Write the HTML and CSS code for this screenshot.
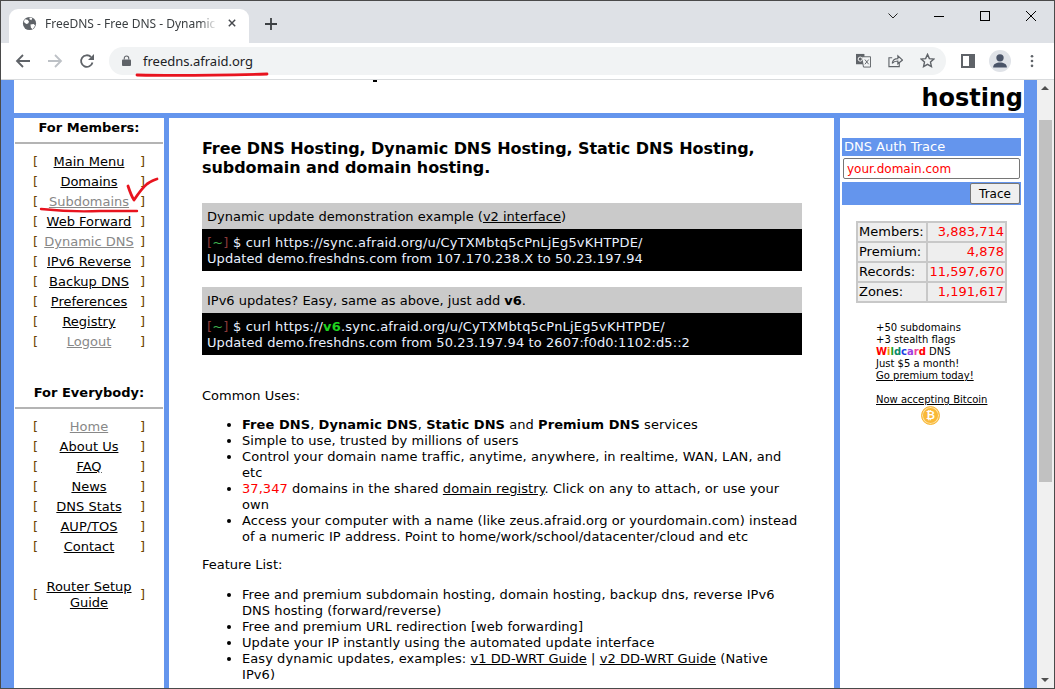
FILE: index.html
```html
<!DOCTYPE html>
<html lang="en">
<head>
<meta charset="utf-8">
<title>FreeDNS - Free DNS - Dynamic DNS</title>
<link rel="stylesheet" href="styles.css">
</head>
<body>
<div class="window">
  <div class="tabstrip">
    <div class="tab">
      <svg class="favicon" viewBox="0 0 16 16"><circle cx="8" cy="8" r="7" fill="#5f6368"/><path d="M3 3.500l3 .5 1.500 2-1 2-2 .5-2.500-2zM9 9l3.500-.5 1.500 1.500-2.500 4-2-1.500zM8 1.500l3 .5-1 2.500-2-1z" fill="#fff"/></svg>
      <span class="tab-title">FreeDNS - Free DNS - Dynamic</span>
      <svg class="tab-close" viewBox="0 0 10 10"><path d="M1 1l8 8M9 1L1 9" stroke="#45484d" stroke-width="1.800"/></svg>
    </div>
    <svg class="newtab" viewBox="0 0 12 12"><path d="M6 0v12M0 6h12" stroke="#3c4043" stroke-width="1.800"/></svg>
    <div class="winctl">
      <svg class="wc wc-down" viewBox="0 0 10 6"><path d="M.5.5L5 5 9.500.5" fill="none" stroke="#222"/></svg>
      <svg class="wc wc-min" viewBox="0 0 10 10"><path d="M0 5.500h10" stroke="#000"/></svg>
      <svg class="wc wc-max" viewBox="0 0 10 10"><rect x=".5" y=".5" width="9" height="9" fill="none" stroke="#000"/></svg>
      <svg class="wc wc-x" viewBox="0 0 10 10"><path d="M0 0l10 10M10 0L0 10" stroke="#000"/></svg>
    </div>
  </div>
  <div class="toolbar">
    <svg class="nav nav-back" viewBox="0 0 16 16"><path d="M15 8H2M8 2L2 8l6 6" fill="none" stroke="#5f6368" stroke-width="1.800"/></svg>
    <svg class="nav nav-fwd" viewBox="0 0 16 16"><path d="M1 8h13M8 2l6 6-6 6" fill="none" stroke="#bdc1c6" stroke-width="1.800"/></svg>
    <svg class="nav nav-reload" viewBox="0 0 16 16"><path d="M13.500 9.500A5.800 5.800 0 1 1 12 4" fill="none" stroke="#5f6368" stroke-width="1.800"/><path d="M15 1v6H9z" fill="#5f6368"/></svg>
    <div class="omnibox">
      <svg class="lock" viewBox="0 0 10 12"><path d="M1 5h8a1 1 0 0 1 1 1v5a1 1 0 0 1-1 1H1a1 1 0 0 1-1-1V6a1 1 0 0 1 1-1z" fill="#5f6368"/><path d="M2.500 5V3.500a2.500 2.500 0 0 1 5 0V5" fill="none" stroke="#5f6368" stroke-width="1.200"/></svg>
      <span class="url">freedns.afraid.org</span>
      <svg class="omni-icon translate" viewBox="0 0 16 16"><path d="M0 1h9v11H0z" fill="#5f6368"/><path d="M6 4h9.500v11H8z" fill="#f1f3f4" stroke="#5f6368"/><circle cx="4.500" cy="6.500" r="2.200" fill="none" stroke="#fff"/><path d="M9.500 7l4 5M13.500 7l-4 5" stroke="#5f6368"/></svg>
      <svg class="omni-icon share" viewBox="0 0 16 16"><path d="M12 9.500V14.500H1V5h3.500" fill="none" stroke="#5f6368" stroke-width="1.200"/><path d="M4.500 11c.5-3.500 3-5 6-5V3l5 4.500-5 4V8.500c-2.500 0-4.500.5-6 2.500z" fill="none" stroke="#5f6368" stroke-width="1.200"/></svg>
      <svg class="omni-icon star" viewBox="0 0 16 16"><path d="M8 1.500l2 4.500 4.800.5-3.600 3.200 1 4.800L8 12.100l-4.200 2.400 1-4.800L1.200 6.500 6 6z" fill="none" stroke="#5f6368" stroke-width="1.500"/></svg>
    </div>
    <svg class="side-panel" viewBox="0 0 14 14"><path d="M0 0h14v14H0z" fill="#5f6368"/><path d="M2 2h6v10H2z" fill="#fff"/></svg>
    <div class="avatar"><svg viewBox="0 0 24 24"><circle cx="12" cy="8.500" r="4" fill="#4a5468"/><path d="M4.500 19c0-4 3.500-5.500 7.500-5.500s7.500 1.500 7.500 5.500z" fill="#4a5468"/></svg></div>
    <svg class="kebab" viewBox="0 0 4 16"><circle cx="2" cy="2.500" r="1.500" fill="#5f6368"/><circle cx="2" cy="8" r="1.500" fill="#5f6368"/><circle cx="2" cy="13.500" r="1.500" fill="#5f6368"/></svg>
  </div>

  <div class="viewport">
    <div class="page">
      <header class="page-head">
        <span class="clipped-y"></span>
        <span class="head-word">hosting</span>
      </header>
      <div class="columns">
        <aside class="left">
          <div class="side-title">For Members:</div>
          <div class="side-rule"></div>
          <ul class="menu">
            <li><span>[</span><a href="#">Main Menu</a><span>]</span></li>
            <li><span>[</span><a href="#">Domains</a><span>]</span></li>
            <li><span>[</span><a href="#" class="muted">Subdomains</a><span>]</span></li>
            <li><span>[</span><a href="#">Web Forward</a><span>]</span></li>
            <li><span>[</span><a href="#" class="muted">Dynamic DNS</a><span>]</span></li>
            <li><span>[</span><a href="#">IPv6 Reverse</a><span>]</span></li>
            <li><span>[</span><a href="#">Backup DNS</a><span>]</span></li>
            <li><span>[</span><a href="#">Preferences</a><span>]</span></li>
            <li><span>[</span><a href="#">Registry</a><span>]</span></li>
            <li><span>[</span><a href="#" class="muted">Logout</a><span>]</span></li>
          </ul>
          <div class="side-title second">For Everybody:</div>
          <div class="side-rule"></div>
          <ul class="menu">
            <li><span>[</span><a href="#" class="muted">Home</a><span>]</span></li>
            <li><span>[</span><a href="#">About Us</a><span>]</span></li>
            <li><span>[</span><a href="#">FAQ</a><span>]</span></li>
            <li><span>[</span><a href="#">News</a><span>]</span></li>
            <li><span>[</span><a href="#">DNS Stats</a><span>]</span></li>
            <li><span>[</span><a href="#">AUP/TOS</a><span>]</span></li>
            <li><span>[</span><a href="#">Contact</a><span>]</span></li>
          </ul>
          <ul class="menu router">
            <li><span>[</span><a href="#">Router Setup Guide</a><span>]</span></li>
          </ul>
        </aside>

        <main class="center">
          <h1>Free DNS Hosting, Dynamic DNS Hosting, Static DNS Hosting, subdomain and domain hosting.</h1>
          <section class="demo">
            <div class="demo-head">Dynamic update demonstration example (<a href="#">v2 interface</a>)</div>
            <div class="demo-term"><span class="cmd"><span class="br">[<span class="gr">~</span>]</span> $ curl https://sync.afraid.org/u/CyTXMbtq5cPnLjEg5vKHTPDE/</span><br>Updated demo.freshdns.com from 107.170.238.X to 50.23.197.94</div>
          </section>
          <section class="demo">
            <div class="demo-head">IPv6 updates? Easy, same as above, just add <b>v6</b>.</div>
            <div class="demo-term"><span class="cmd"><span class="br">[<span class="gr">~</span>]</span> $ curl https://<b class="v6">v6</b>.sync.afraid.org/u/CyTXMbtq5cPnLjEg5vKHTPDE/</span><br>Updated demo.freshdns.com from 50.23.197.94 to 2607:f0d0:1102:d5::2</div>
          </section>
          <p class="lead">Common Uses:</p>
          <ul class="list">
            <li><b>Free DNS</b>, <b>Dynamic DNS</b>, <b>Static DNS</b> and <b>Premium DNS</b> services</li>
            <li>Simple to use, trusted by millions of users</li>
            <li>Control your domain name traffic, anytime, anywhere, in realtime, WAN, LAN, and etc</li>
            <li><span class="red">37,347</span> domains in the shared <a href="#">domain registry</a>. Click on any to attach, or use your own</li>
            <li>Access your computer with a name (like zeus.afraid.org or yourdomain.com) instead of a numeric IP address. Point to home/work/school/datacenter/cloud and etc</li>
          </ul>
          <p class="lead feature">Feature List:</p>
          <ul class="list second-list">
            <li>Free and premium subdomain hosting, domain hosting, backup dns, reverse IPv6 DNS hosting (forward/reverse)</li>
            <li>Free and premium URL redirection [web forwarding]</li>
            <li>Update your IP instantly using the automated update interface</li>
            <li>Easy dynamic updates, examples: <a href="#">v1 DD-WRT Guide</a> | <a href="#">v2 DD-WRT Guide</a> (Native IPv6)</li>
          </ul>
        </main>

        <aside class="right">
          <form class="trace">
            <div class="trace-title">DNS Auth Trace</div>
            <div class="trace-field"><input class="trace-input" type="text" value="your.domain.com"></div>
            <div class="trace-action"><button class="trace-btn" type="button">Trace</button></div>
          </form>
          <table class="stats">
            <tr><td>Members:</td><td class="num">3,883,714</td></tr>
            <tr><td>Premium:</td><td class="num">4,878</td></tr>
            <tr><td>Records:</td><td class="num">11,597,670</td></tr>
            <tr><td>Zones:</td><td class="num">1,191,617</td></tr>
          </table>
          <div class="promo">
            +50 subdomains<br>+3 stealth flags<br>
            <b class="wild"><i>W</i><i>i</i><i>l</i><i>d</i><i>c</i><i>a</i><i>r</i><i>d</i></b> DNS<br>
            Just $5 a month!<br>
            <a href="#">Go premium today!</a>
            <div class="btc-block">
              <a href="#">Now accepting Bitcoin</a>
              <div class="btc"><span>₿</span></div>
            </div>
          </div>
        </aside>
      </div>
    </div>
    <div class="scrollbar">
      <span class="arrow-up"></span>
      <span class="thumb"></span>
      <span class="arrow-down"></span>
    </div>
  </div>
  <svg class="scribble" viewBox="0 0 1055 689">
    <path d="M137 75 C180 76 230 75 267 74" fill="none" stroke="#e8141f" stroke-width="2.800" stroke-linecap="round"/>
    <path d="M41 209 C60 211 80 212 100 211 C115 211 125 211 137 211" fill="none" stroke="#e8141f" stroke-width="2.400" stroke-linecap="round"/>
    <path d="M128 186 C130 192 132 197 134 200 C138 194 142 188 147 184 C150 182 153 180 157 179" fill="none" stroke="#e8141f" stroke-width="2.800" stroke-linecap="round" stroke-linejoin="round"/>
  </svg>
</div>
</body>
</html>
```

FILE: styles.css
```css
* { box-sizing: border-box; }
html, body { margin: 0; height: 100%; overflow: hidden; }
.window {
  width: 1055px; height: 689px;
  display: flex; flex-direction: column; position: relative;
  border: 1px solid #4a4a4a;
  background: #fff; overflow: hidden;
}
.tabstrip {
  height: 42px; flex: none; background: #dee1e6;
  display: flex; align-items: flex-end; padding-left: 8px;
}
.tab {
  width: 240px; height: 34px; background: #fff;
  border-radius: 9px 9px 0 0;
  display: flex; align-items: center; padding: 0 12px 6px 13px;
  font: 12px "Noto Sans", "Open Sans", sans-serif; color: #3c4043;
}
.favicon { width: 15px; height: 15px; flex: none; }
.tab-title {
  margin-left: 8px; width: 172px; white-space: nowrap; overflow: hidden; flex: none;
  -webkit-mask-image: linear-gradient(to right, #000 90%, transparent 100%);
  mask-image: linear-gradient(to right, #000 90%, transparent 100%);
}
.tab-close { width: 8px; height: 8px; margin-left: 11px; flex: none; }
.newtab { width: 12px; height: 12px; margin: 0 0 13px 16px; flex: none; }
.winctl { margin-left: auto; align-self: flex-start; display: flex; align-items: center; height: 30px; }
.wc { width: 10px; height: 10px; display: block; }
.wc-down { margin-right: 36px; height: 6px; }
.wc-min { margin-right: 36px; }
.wc-max { margin-right: 36px; }
.wc-x { margin-right: 18px; }
.toolbar {
  height: 37px; flex: none; background: #fff; border-bottom: 1px solid #d9dbdd;
  display: flex; align-items: center; padding-bottom: 1px;
}
.nav { width: 16px; height: 16px; flex: none; }
.nav-back { margin-left: 14px; }
.nav-fwd { margin-left: 16px; }
.nav-reload { margin-left: 16px; }
.omnibox {
  width: 837px; height: 28px; margin-left: 14px; flex: none;
  background: #f1f3f4; border-radius: 14px;
  display: flex; align-items: center; padding-left: 13px;
}
.lock { width: 9px; height: 11px; flex: none; }
.url { margin-left: 12px; font: 13px "Noto Sans", "Open Sans", sans-serif; color: #202124; }
.omni-icon { width: 15px; height: 15px; flex: none; }
.translate { margin-left: auto; }
.share { margin-left: 17px; }
.star { margin-left: 17px; margin-right: 11px; }
.side-panel { width: 14px; height: 14px; flex: none; margin-left: 15px; }
.avatar { width: 22px; height: 22px; border-radius: 50%; background: #e0e3e8; margin-left: 14px; flex: none; }
.avatar svg { display: block; width: 22px; height: 22px; }
.kebab { width: 4px; height: 14px; flex: none; margin-left: 19px; }

.viewport { flex: 1; min-height: 0; display: flex; overflow: hidden; }
.page {
  flex: 1; min-width: 0; background: #6495ed;
  padding: 0 13px;
  font: 13px/16px "DejaVu Sans", Verdana, sans-serif; color: #000;
}
.page a { color: #000; }
.page-head {
  height: 33px; background: #fff; position: relative;
  display: flex; justify-content: flex-end; align-items: flex-start;
}
.clipped-y { position: absolute; left: 359px; top: 0; width: 4px; height: 2px; background: #000; }
.head-word { font-size: 24px; font-weight: 700; line-height: 30px; padding-top: 3px; padding-right: 1px; letter-spacing: -.05px; }
.columns { display: grid; grid-template-columns: 150px 5px 665px 6px 184px; margin-top: 5px; height: 600px; }
.left { grid-column: 1; background: #fff; overflow: hidden; }
.center { grid-column: 3; background: #fff; padding: 21px 32px 0 33px; overflow: hidden; }
.right { grid-column: 5; background: #fff; overflow: hidden; }

.side-title { font-weight: 700; text-align: center; line-height: 16px; margin-top: 2px; }
.side-title.second { margin-top: 33px; }
.side-rule { height: 2px; background: #b4b4b4; margin: 6px 1px 0; }
.menu { list-style: none; margin: 8px 0 0; padding: 0 19px; }
.menu li { display: flex; justify-content: space-between; align-items: center; height: 20px; color: #6b4300; }
.menu a { flex: 1; text-align: center; color: #000; padding: 0 1px; }
.page .menu a.muted { color: #888; }
.menu.router { margin-top: 22px; }
.menu.router li { height: 32px; }

h1 { margin: 0; font-size: 16px; line-height: 19px; font-weight: 700; letter-spacing: -.07px; }
.demo { width: 600px; margin-top: 26px; }
.demo + .demo { margin-top: 16px; }
.demo-head { height: 26px; padding: 6px 5px 0; background: #cacaca; white-space: nowrap; }
.demo-term { height: 42px; padding: 6px 5px 0; background: #000; color: #e8f0ff; white-space: nowrap; letter-spacing: .09px; }
.cmd { letter-spacing: .18px; }
.br { color: #8b3a3a; }
.gr { color: #3fb04f; }
.v6 { color: #1fd01f; }
.lead { margin: 0; }
.center > .lead { margin-top: 33px; }
.center > .lead.feature { margin-top: 12px; }
.list { margin: 13px 0 0; padding: 0 0 0 40px; width: 600px; letter-spacing: .06px; }
.second-list { margin-top: 14px; }
.red { color: #f00; }

.trace { margin: 20px 3px 0 2px; background: #fff; }
.trace-title { background: #6495ed; color: #fff; height: 18px; line-height: 18px; padding-left: 2px; }
.trace-field { padding: 2px 1px 3px; }
.trace-input {
  display: block; width: 177px; height: 21px; padding: 0 3px; margin: 0;
  border: 1px solid #767676; border-radius: 2px; background: #fff;
  font: 12px "DejaVu Sans", Verdana, sans-serif; color: #f00;
}
.trace-action { background: #6495ed; height: 23px; display: flex; justify-content: flex-end; padding: 1px; }
.trace-btn {
  width: 50px; height: 21px; padding: 0; border: 1px solid #767676; border-radius: 2px;
  background: #efefef; color: #000; font: 12px "DejaVu Sans", Verdana, sans-serif;
}
.stats {
  margin: 16px 0 0 16px; border-collapse: separate; border-spacing: 2px; background: #c8c8c8;
  font-size: 13px; line-height: 16px; width: 151px;
}
.stats td { background: #eee; padding: 1px; height: 18px; white-space: nowrap; }
.stats .num { text-align: right; color: #f00; }
.promo { margin: 19px 0 0 36px; font-size: 10px; line-height: 12px; color: #000; white-space: nowrap; }
.wild i { font-style: normal; }
.wild i:nth-child(1) { color: #f00; }
.wild i:nth-child(2) { color: #e8a000; }
.wild i:nth-child(3) { color: #18a018; }
.wild i:nth-child(4) { color: #0a8a6a; }
.wild i:nth-child(5) { color: #2040e0; }
.wild i:nth-child(6) { color: #a040e0; }
.wild i:nth-child(7) { color: #f040a0; }
.wild i:nth-child(8) { color: #f00; }
.btc-block { margin-top: 12px; }
.btc {
  width: 19px; height: 19px; border-radius: 50%; margin: 0 0 0 45px;
  background: #f9b938; border: 1px solid #f9b938; box-shadow: inset 0 0 0 1px #fde3a8; color: #fff;
  display: flex; align-items: center; justify-content: center;
  font: 700 11px/1 "DejaVu Sans", sans-serif;
}

.scrollbar { width: 17px; flex: none; background: #f0f0f0; position: relative; }
.arrow-up { position: absolute; left: 4px; top: 6px; border: 4px solid transparent; border-top: 0; border-bottom: 4px solid #505050; }
.arrow-down { position: absolute; left: 4px; bottom: 6px; border: 4px solid transparent; border-bottom: 0; border-top: 4px solid #505050; }
.thumb { position: absolute; left: 2px; width: 13px; top: 40px; height: 362px; background: #c1c1c1; }
.scribble { position: absolute; left: -1px; top: -1px; width: 1055px; height: 689px; pointer-events: none; }
```
